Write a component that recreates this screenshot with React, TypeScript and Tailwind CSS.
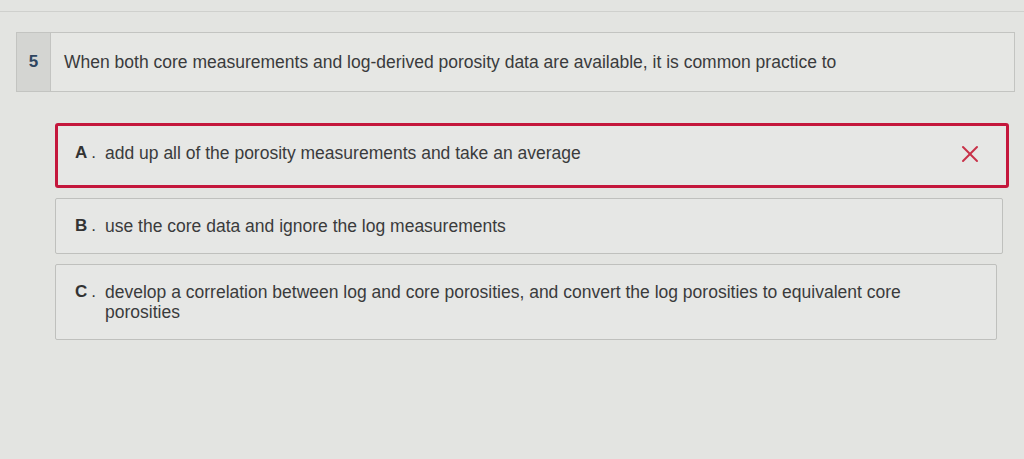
import { X } from 'lucide-react';

const options = [
  { key: 'A', text: 'add up all of the porosity measurements and take an average', wrong: true, extra: '' },
  { key: 'B', text: 'use the core data and ignore the log measurements', wrong: false, extra: 'mr-[6px]' },
  {
    key: 'C',
    text: 'develop a correlation between log and core porosities, and convert the log porosities to equivalent core porosities',
    wrong: false,
    extra: 'mr-[12px]',
  },
];

export default function App() {
  return (
    <div
      className="w-[1024px] h-[459px] overflow-hidden bg-[#e3e4e1] text-[#3a3b3c]"
      style={{ fontFamily: '"Liberation Sans", Arial, sans-serif' }}
    >
      {/* previous item edge */}
      <div className="h-[12px] border-b border-[#cfd0cd]" />

      <div className="pt-[20px] pl-[16px] pr-[9px]">
        {/* Question */}
        <div className="flex h-[60px] border border-[#c3c4c1] bg-[#e6e7e4]">
          <div className="w-[34px] shrink-0 bg-[#d4d5d2] border-r border-[#c3c4c1] flex items-center justify-center text-[17px] font-bold text-[#2e4560]">
            5
          </div>
          <div className="flex-1 flex items-center pl-[13px] text-[17.5px]">
            When both core measurements and log-derived porosity data are available, it is common practice to
          </div>
        </div>

        {/* Options */}
        <div className="mt-[31px] ml-[39px] mr-[6px] flex flex-col gap-[10px]">
          {options.map((o) => (
            <div
              key={o.key}
              className={
                o.wrong
                  ? 'flex items-start justify-between min-h-[58px] pl-[17px] pr-[22px] py-[17px] border-[3px] border-[#c4173c] rounded-[3px] bg-[#e6e7e5]'
                  : `flex items-start justify-between min-h-[56px] pl-[19px] pr-[20px] py-[17px] border border-[#bfc0bd] rounded-[2px] bg-[#e6e7e5] ${o.extra}`
              }
            >
              <div className="flex items-start">
                <span className="w-[30px] shrink-0 text-[17px] font-bold text-[#333] leading-[20px]">
                  {o.key}
                  <span className="ml-[4px] font-normal">.</span>
                </span>
                <span className="text-[17.5px] leading-[20px] max-w-[815px]">{o.text}</span>
              </div>
              {o.wrong && <X className="w-[28px] h-[28px] text-[#c83148] shrink-0 mt-[-3px]" strokeWidth={1.7} />}
            </div>
          ))}
        </div>
      </div>
    </div>
  );
}
